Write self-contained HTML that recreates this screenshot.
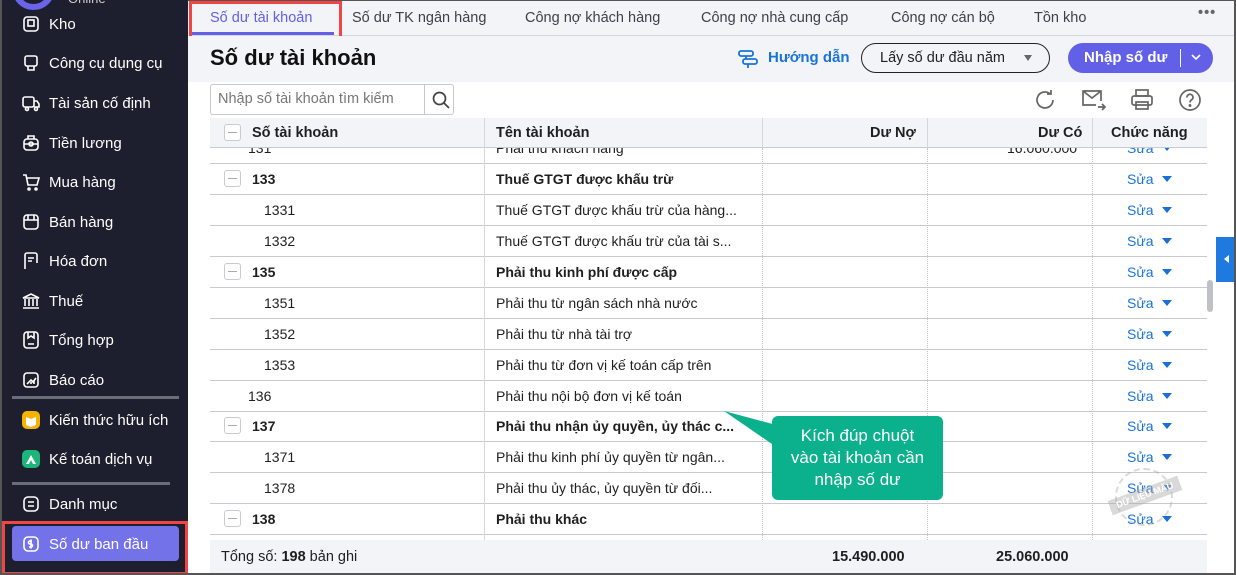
<!DOCTYPE html>
<html><head><meta charset="utf-8">
<style>
*{box-sizing:border-box;margin:0;padding:0}
body{width:1236px;height:575px;overflow:hidden;font-family:"Liberation Sans",sans-serif;background:#fff;position:relative;color:#1f1f1f}
.abs{position:absolute}
#side{left:0;top:0;width:188px;height:575px;background:#1d1f2e;border-left:2px solid #555;overflow:hidden}
.si{position:absolute;left:20px;color:#fff;font-size:15px;display:flex;align-items:center;gap:9px;height:24px}
.si svg{width:18px;height:18px}
.sep{position:absolute;left:10px;width:167px;height:3px;background:#6a6d78}
#tabs{left:188px;top:0;width:1048px;height:36px;background:#f3f4f8;border-bottom:1px solid #d6d7dc;border-top:1px solid #555}
.tab{position:absolute;top:9px;font-size:14.5px;color:#3d3f49}
#hdr{left:188px;top:36px;width:1048px;height:46px;background:#f3f4f8}
.row{position:absolute;left:210px;width:997px;height:31px;border-bottom:1px solid #c9cad2;font-size:14px}
.row div{position:absolute;top:7px;white-space:nowrap}
.cb{position:absolute;left:14px;top:6px;width:17px;height:17px;border:1px solid #c9cbd2;border-radius:3px;background:#fff}
.cb:after{content:"";position:absolute;left:3px;top:7px;width:9px;height:1px;background:#aaa}
.vl{position:absolute;top:148px;height:392px;border-left:1px dotted #c4c5cc}
.edit{color:#1a73d9;left:917px}
.tri{position:absolute;left:952px;top:12px;width:0;height:0;border-left:5px solid transparent;border-right:5px solid transparent;border-top:6px solid #1a6fd6}
b{font-weight:bold}
</style></head><body>
<div id="side" class="abs">
 <div class="abs" style="left:10px;top:-33px;width:43px;height:43px;border:6px solid #6b63e8;border-radius:50%;background:#1d1f2e"></div>
 <div class="abs" style="left:66px;top:-9px;color:#ccc;font-size:13px">Online</div>
 <div class="si" style="top:12px"><svg viewBox="0 0 18 18" fill="none" stroke="#fff" stroke-width="1.6"><rect x="2" y="2" width="14" height="14" rx="3"/><rect x="6" y="5" width="6" height="6"/></svg>Kho</div>
 <div class="si" style="top:51px"><svg viewBox="0 0 18 18" fill="none" stroke="#fff" stroke-width="1.6"><rect x="3" y="2" width="12" height="10" rx="2"/><path d="M6 12v4h6v-4"/></svg>Công cụ dụng cụ</div>
 <div class="si" style="top:91px"><svg viewBox="0 0 18 18" fill="none" stroke="#fff" stroke-width="1.6"><rect x="1" y="3" width="11" height="10" rx="2"/><path d="M12 7h3l2 3v3h-5"/><circle cx="5" cy="15" r="1.5"/><circle cx="14" cy="15" r="1.5"/></svg>Tài sản cố định</div>
 <div class="si" style="top:131px"><svg viewBox="0 0 18 18" fill="none" stroke="#fff" stroke-width="1.6"><rect x="2" y="5" width="14" height="11" rx="3"/><path d="M6 5V2h6v3M2 10h14"/><circle cx="9" cy="10" r="2"/></svg>Tiền lương</div>
 <div class="si" style="top:170px"><svg viewBox="0 0 18 18" fill="none" stroke="#fff" stroke-width="1.6"><path d="M1 2h3l2 10h9l2-7H5"/><circle cx="7" cy="16" r="1"/><circle cx="14" cy="16" r="1"/></svg>Mua hàng</div>
 <div class="si" style="top:210px"><svg viewBox="0 0 18 18" fill="none" stroke="#fff" stroke-width="1.6"><rect x="2" y="2" width="14" height="14" rx="3"/><path d="M2 7h14M6 2v5M12 2v5"/></svg>Bán hàng</div>
 <div class="si" style="top:249px"><svg viewBox="0 0 18 18" fill="none" stroke="#fff" stroke-width="1.6"><path d="M3 17V3a2 2 0 012-2h8a2 2 0 012 2v8M6 6h6M6 9h4"/></svg>Hóa đơn</div>
 <div class="si" style="top:289px"><svg viewBox="0 0 18 18" fill="none" stroke="#fff" stroke-width="1.6"><path d="M1 6l8-4 8 4zM3 7v7M7 7v7M11 7v7M15 7v7M1 16h16"/></svg>Thuế</div>
 <div class="si" style="top:328px"><svg viewBox="0 0 18 18" fill="none" stroke="#fff" stroke-width="1.6"><rect x="2" y="1" width="14" height="16" rx="3"/><path d="M6 1v6l3-2 3 2V1M6 13h6"/></svg>Tổng hợp</div>
 <div class="si" style="top:368px"><svg viewBox="0 0 18 18" fill="none" stroke="#fff" stroke-width="1.6"><rect x="2" y="2" width="14" height="14" rx="3"/><path d="M5 13l4-4 2 2 3-4M6 13v0M9 13v-2M12 13v-3"/></svg>Báo cáo</div>
 <div class="sep" style="top:396px"></div>
 <div class="si" style="top:408px"><svg viewBox="0 0 18 18"><rect x="0" y="0" width="18" height="18" rx="5" fill="#f5b400"/><path d="M4 6l5 2 5-2v8l-5 2-5-2z" fill="#fff"/></svg>Kiến thức hữu ích</div>
 <div class="si" style="top:447px"><svg viewBox="0 0 18 18"><rect x="0" y="0" width="18" height="18" rx="5" fill="#1db57a"/><path d="M4 14l5-9 5 9h-3l-2-4-2 4z" fill="#fff"/></svg>Kế toán dịch vụ</div>
 <div class="sep" style="top:482px;width:158px"></div>
 <div class="si" style="top:492px"><svg viewBox="0 0 18 18" fill="none" stroke="#fff" stroke-width="1.6"><rect x="2" y="2" width="14" height="14" rx="4"/><path d="M6 7h6M6 11h6"/></svg>Danh mục</div>
 <div class="abs" style="left:0;top:521px;width:186px;height:54px;border:3px solid #f04545"></div>
 <div class="abs" style="left:10px;top:526px;width:167px;height:35px;background:#7472e8;border-radius:4px"></div>
 <div class="si" style="top:532px"><svg viewBox="0 0 18 18" fill="none" stroke="#fff" stroke-width="1.6"><rect x="2" y="2" width="14" height="14" rx="4"/><path d="M10 6H8a1.5 1.5 0 000 3h1a1.5 1.5 0 010 3H7M9 4.5v9"/></svg>Số dư ban đầu</div>
</div>

<div id="tabs" class="abs">
 <div class="abs" style="left:1px;top:0;width:153px;height:40px;border:3px solid #f04545"></div>
 <div class="tab" style="left:22px;color:#6360e8">Số dư tài khoản</div>
 <div class="abs" style="left:4px;top:31px;width:142px;height:3px;background:#6360e8"></div>
 <div class="tab" style="left:164px">Số dư TK ngân hàng</div>
 <div class="tab" style="left:337px">Công nợ khách hàng</div>
 <div class="tab" style="left:513px">Công nợ nhà cung cấp</div>
 <div class="tab" style="left:703px">Công nợ cán bộ</div>
 <div class="tab" style="left:846px">Tồn kho</div>
 <div class="tab" style="left:1010px;top:4px;letter-spacing:1px;font-weight:bold;color:#666">•••</div>
</div>
<div id="hdr" class="abs">
 <div class="abs" style="left:22px;top:9px;font-size:22px;font-weight:bold;color:#111">Số dư tài khoản</div>
 <svg class="abs" style="left:549px;top:13px" width="22" height="20" viewBox="0 0 22 20" fill="none" stroke="#1a73d9" stroke-width="1.8"><rect x="2" y="2" width="14" height="5" rx="2"/><rect x="6" y="10" width="14" height="5" rx="2"/><path d="M9 7v3M11 15v4"/></svg>
 <div class="abs" style="left:580px;top:13px;font-size:15px;color:#1a73d9;font-weight:bold">Hướng dẫn</div>
 <div class="abs" style="left:673px;top:7px;width:189px;height:30px;border:1px solid #222;border-radius:15px;font-size:14.5px;padding:6px 0 0 18px">Lấy số dư đầu năm</div>
 <div class="abs" style="left:836px;top:19px;border-left:4.5px solid transparent;border-right:4.5px solid transparent;border-top:6px solid #666"></div>
 <div class="abs" style="left:880px;top:7px;width:145px;height:30px;background:#6360e8;border-radius:15px;color:#fff;font-weight:bold;font-size:15px;padding:6px 0 0 16px">Nhập số dư</div>
 <div class="abs" style="left:992px;top:13px;width:1px;height:18px;background:#fff"></div>
 <svg class="abs" style="left:1002px;top:17px" width="12" height="10" viewBox="0 0 12 10" fill="none" stroke="#fff" stroke-width="1.6"><path d="M2 2l4 4 4-4"/></svg>
</div>

<div class="abs" style="left:210px;top:84px;width:244px;height:31px;border:1px solid #c8c9cf;border-radius:3px"></div>
<div class="abs" style="left:424px;top:84px;width:1px;height:31px;background:#c8c9cf"></div>
<div class="abs" style="left:218px;top:91px;font-size:14.5px;color:#777">Nhập số tài khoản tìm kiếm</div>
<svg class="abs" style="left:431px;top:90px" width="20" height="20" viewBox="0 0 20 20" fill="none" stroke="#444" stroke-width="1.7"><circle cx="8.5" cy="8.5" r="6"/><path d="M13 13l5 5"/></svg>
<svg class="abs" style="left:1033px;top:88px" width="24" height="24" viewBox="0 0 24 24" fill="none" stroke="#666" stroke-width="1.7"><path d="M20 12a8 8 0 11-3-6.3M18 2v4h-4"/></svg>
<svg class="abs" style="left:1081px;top:88px" width="26" height="24" viewBox="0 0 26 24" fill="none" stroke="#666" stroke-width="1.7"><path d="M20 13V3H2v14h13M2 3l9 7 9-7M17 19h7M21 16l3 3-3 3"/></svg>
<svg class="abs" style="left:1130px;top:88px" width="24" height="24" viewBox="0 0 24 24" fill="none" stroke="#666" stroke-width="1.7"><rect x="6" y="2" width="12" height="6"/><rect x="2" y="8" width="20" height="9" rx="2"/><rect x="6" y="14" width="12" height="7"/></svg>
<svg class="abs" style="left:1178px;top:88px" width="24" height="24" viewBox="0 0 24 24" fill="none" stroke="#666" stroke-width="1.7"><circle cx="12" cy="12" r="10"/><path d="M9 9.5a3 3 0 115 2c-1 .8-2 1.2-2 3"/><circle cx="12" cy="17.5" r=".6" fill="#666"/></svg>

<div class="abs" style="left:210px;top:118px;width:997px;height:30px;background:#f3f4f8;border-bottom:1px solid #c9cad2;font-size:14.5px;font-weight:bold">
 <div class="cb" style="top:6px"></div>
 <div class="abs" style="left:42px;top:7px">Số tài khoản</div>
 <div class="abs" style="left:274px;top:0;width:1px;height:30px;background:#d6d7dc"></div>
 <div class="abs" style="left:286px;top:7px">Tên tài khoản</div>
 <div class="abs" style="left:552px;top:0;width:1px;height:30px;background:#d6d7dc"></div>
 <div class="abs" style="left:660px;top:7px">Dư Nợ</div>
 <div class="abs" style="left:717px;top:0;width:1px;height:30px;background:#d6d7dc"></div>
 <div class="abs" style="left:828px;top:7px">Dư Có</div>
 <div class="abs" style="left:882px;top:0;width:1px;height:30px;background:#d6d7dc"></div>
 <div class="abs" style="left:901px;top:7px">Chức năng</div>
</div>

<div class="abs" style="left:210px;top:148px;width:997px;height:392px;overflow:hidden">
<div style="position:absolute;left:-210px;top:-148px;width:1236px;height:575px">
 <div class="row" style="top:133px"><div style="left:38px">131</div><div style="left:286px">Phải thu khách hàng</div><div style="left:797px">16.060.000</div><div class="edit">Sửa</div><span class="tri"></span></div>
 <div class="row" style="top:164px"><span class="cb"></span><div style="left:42px"><b>133</b></div><div style="left:286px"><b>Thuế GTGT được khấu trừ</b></div><div class="edit">Sửa</div><span class="tri"></span></div>
 <div class="row" style="top:195px"><div style="left:54px">1331</div><div style="left:286px">Thuế GTGT được khấu trừ của hàng...</div><div class="edit">Sửa</div><span class="tri"></span></div>
 <div class="row" style="top:226px"><div style="left:54px">1332</div><div style="left:286px">Thuế GTGT được khấu trừ của tài s...</div><div class="edit">Sửa</div><span class="tri"></span></div>
 <div class="row" style="top:257px"><span class="cb"></span><div style="left:42px"><b>135</b></div><div style="left:286px"><b>Phải thu kinh phí được cấp</b></div><div class="edit">Sửa</div><span class="tri"></span></div>
 <div class="row" style="top:288px"><div style="left:54px">1351</div><div style="left:286px">Phải thu từ ngân sách nhà nước</div><div class="edit">Sửa</div><span class="tri"></span></div>
 <div class="row" style="top:319px"><div style="left:54px">1352</div><div style="left:286px">Phải thu từ nhà tài trợ</div><div class="edit">Sửa</div><span class="tri"></span></div>
 <div class="row" style="top:350px"><div style="left:54px">1353</div><div style="left:286px">Phải thu từ đơn vị kế toán cấp trên</div><div class="edit">Sửa</div><span class="tri"></span></div>
 <div class="row" style="top:381px"><div style="left:38px">136</div><div style="left:286px">Phải thu nội bộ đơn vị kế toán</div><div class="edit">Sửa</div><span class="tri"></span></div>
 <div class="row" style="top:411px"><span class="cb"></span><div style="left:42px"><b>137</b></div><div style="left:286px"><b>Phải thu nhận ủy quyền, ủy thác c...</b></div><div class="edit">Sửa</div><span class="tri"></span></div>
 <div class="row" style="top:442px"><div style="left:54px">1371</div><div style="left:286px">Phải thu kinh phí ủy quyền từ ngân...</div><div class="edit">Sửa</div><span class="tri"></span></div>
 <div class="row" style="top:473px"><div style="left:54px">1378</div><div style="left:286px">Phải thu ủy thác, ủy quyền từ đối...</div><div class="edit">Sửa</div><span class="tri"></span></div>
 <div class="row" style="top:504px"><span class="cb"></span><div style="left:42px"><b>138</b></div><div style="left:286px"><b>Phải thu khác</b></div><div class="edit">Sửa</div><span class="tri"></span></div>
 <div class="vl" style="left:762px"></div>
 <div class="vl" style="left:927px"></div>
 <div class="vl" style="left:1092px"></div>
</div></div>
<div class="abs" style="left:484px;top:148px;width:1px;height:392px;background:#d6d7dc"></div>

<div class="abs" style="left:210px;top:540px;width:997px;height:33px;background:#f3f4f8;font-size:14.5px">
 <div class="abs" style="left:11px;top:9px">Tổng số: <b>198</b> bản ghi</div>
 <div class="abs" style="left:622px;top:9px;font-weight:bold">15.490.000</div>
 <div class="abs" style="left:786px;top:9px;font-weight:bold">25.060.000</div>
</div>

<div class="abs" style="left:1207px;top:280px;width:6px;height:32px;background:#c0c1c6;border-radius:3px"></div>
<div class="abs" style="left:1216px;top:237px;width:20px;height:45px;background:#1f7ae0"></div>
<div class="abs" style="left:1224px;top:255px;border-top:4.5px solid transparent;border-bottom:4.5px solid transparent;border-right:5px solid #fff"></div>

<svg class="abs" style="left:722px;top:408px" width="60" height="40"><path d="M2 3L58 18 50 36z" fill="#0bb08c"/></svg>
<div class="abs" style="left:772px;top:416px;width:171px;height:84px;background:#0bb08c;border-radius:6px;color:#fff;font-size:17px;text-align:center;line-height:22px;padding-top:9px">Kích đúp chuột<br>vào tài khoản cần<br>nhập số dư</div>

<div class="abs" style="left:1115px;top:468px;width:58px;height:58px;border:2px dashed rgba(150,150,150,.35);border-radius:50%"></div>
<div class="abs" style="left:1108px;top:488px;width:74px;height:15px;background:rgba(170,170,170,.45);transform:rotate(-20deg);color:#fff;font-size:9px;font-weight:bold;text-align:center;line-height:15px">DỮ LIỆU MẪU</div>
<div class="abs" style="left:0;top:573px;width:1236px;height:2px;background:#555"></div>
<div class="abs" style="left:1234px;top:0;width:2px;height:575px;background:#555"></div>
</body></html>
